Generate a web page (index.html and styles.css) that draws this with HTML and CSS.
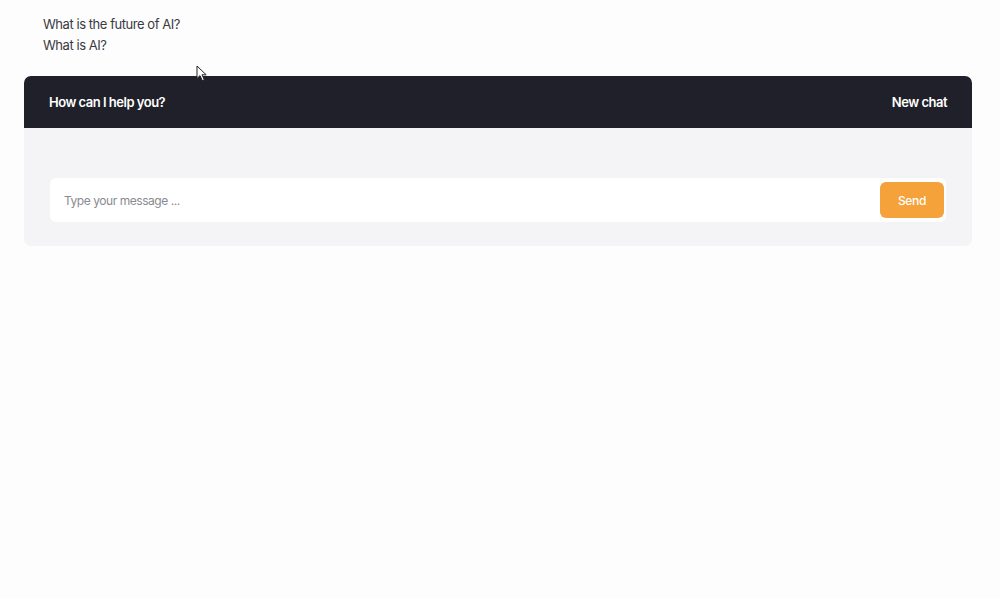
FILE: index.html
```html
<!DOCTYPE html>
<html lang="en">
<head>
    <meta charset="UTF-8">
    <meta name="viewport" content="width=device-width, initial-scale=1.0">
    <title>Chat</title>
    <link rel="stylesheet" href="styles.css">
</head>
<body>
    <ul class="history">
        <li>What is the future of AI?</li>
        <li>What is AI?</li>
    </ul>

    <div class="chat-card">
        <div class="chat-header">
            <span class="chat-title">How can I help you?</span>
            <span class="new-chat">New chat</span>
        </div>
        <div class="chat-body">
            <form class="message-row">
                <input class="message-input" type="text" placeholder="Type your message ...">
                <button class="send-button" type="button">Send</button>
            </form>
        </div>
    </div>

    <!-- mouse pointer from the capture -->
    <svg class="cursor" width="12" height="17" viewBox="0 0 12 17">
        <path d="M1 1 L1 13.5 L4 10.6 L6.3 15.6 L8.3 14.7 L6 9.8 L10.2 9.8 Z" fill="#fff" stroke="#222" stroke-width="1" stroke-linejoin="round"/>
    </svg>
</body>
</html>
```

FILE: styles.css
```css
* {
    margin: 0;
    padding: 0;
    box-sizing: border-box;
    font-family: 'Inter', 'Noto Sans', sans-serif;
}

body {
    min-height: 100vh;
    background: #fdfdfd;
    padding: 14px 28px 0 24px;
    position: relative;
}

.history {
    list-style: none;
    padding-left: 19px;
    margin-bottom: 20px;
}

.history li {
    font-size: 13px;
    line-height: 21px;
    color: #3a3a40;
    letter-spacing: -0.45px;
}

.chat-card {
    border-radius: 7px;
    overflow: hidden;
    background: #f4f4f6;
}

.chat-header {
    height: 52px;
    background: #1f2029;
    display: flex;
    justify-content: space-between;
    align-items: center;
    padding: 0 25px;
    color: #fff;
    font-size: 13px;
    font-weight: 600;
    letter-spacing: -0.5px;
}

.chat-body {
    padding: 50px 26px 24px;
}

.message-row {
    display: flex;
    align-items: center;
    background: #fff;
    border-radius: 6px;
    padding: 4px 2px 4px 14px;
}

.message-input {
    flex: 1;
    border: none;
    outline: none;
    background: transparent;
    font-size: 12px;
    color: #333;
    letter-spacing: -0.45px;
}

.message-input::placeholder {
    color: #8a8a90;
}

.send-button {
    width: 64px;
    height: 36px;
    border: none;
    border-radius: 6px;
    background: #f5a23a;
    color: #fff;
    font-size: 12px;
    font-weight: 500;
    letter-spacing: -0.3px;
    cursor: pointer;
}

.cursor {
    position: absolute;
    top: 65px;
    left: 196px;
}
```
